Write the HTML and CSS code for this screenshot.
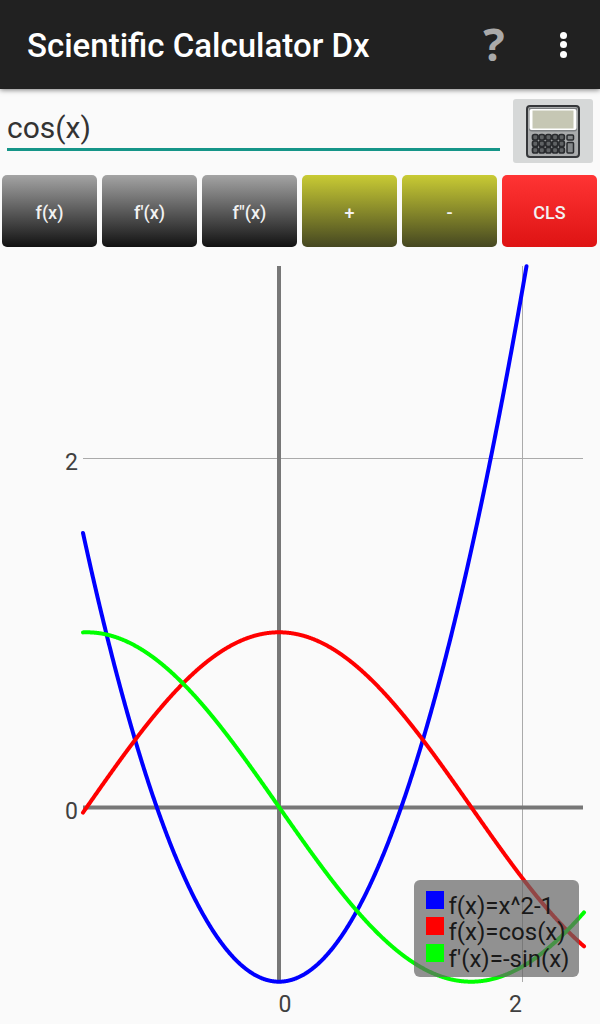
FILE: index.html
```html
<!DOCTYPE html>
<html lang="en">
<head>
	<meta charset="UTF-8">
	<meta name="viewport" content="width=device-width, initial-scale=1.0">
	<title>Scientific Calculator Dx</title>
	<link rel="stylesheet" href="styles.css">
</head>
<body>
<header class="app-bar">
	<h1>Scientific Calculator Dx</h1>
	<button type="button" class="help-button" aria-label="Help">?</button>
	<button type="button" class="menu-button" aria-label="Menu">
		<span class="dot"></span>
		<span class="dot"></span>
		<span class="dot"></span>
	</button>
</header>

<div class="input-row">
	<input type="text" class="formula" value="cos(x)" aria-label="Function">
	<button type="button" class="calc-button" aria-label="Calculator">
		<svg width="54" height="53" viewBox="0 0 54 53">
			<rect x="1" y="1" width="52" height="51" rx="3" fill="#a9abac" stroke="#35373a" stroke-width="2"/>
			<path d="M3 3H51V24Q51 26.500 48 26.500H6Q3 26.500 3 24Z" fill="#7b7e80"/>
			<rect x="3.500" y="4" width="47" height="21" rx="2" fill="#fff"/>
			<rect x="6.500" y="5.500" width="41" height="18" fill="#c6c7b4"/>
			<g id="keys" fill="#606365" stroke="#292b2e" stroke-width="1.700"></g>
			<rect x="41" y="30" width="6.500" height="5" rx="1" fill="#85888a" stroke="#292b2e" stroke-width="1.500"/>
			<rect x="41" y="37.500" width="6.500" height="10.500" rx="1" fill="#85888a" stroke="#292b2e" stroke-width="1.500"/>
		</svg>
	</button>
</div>

<div class="button-row">
	<button type="button" class="gray">f(x)</button>
	<button type="button" class="gray">f'(x)</button>
	<button type="button" class="gray">f"(x)</button>
	<button type="button" class="olive">+</button>
	<button type="button" class="olive">-</button>
	<button type="button" class="red">CLS</button>
</div>

<div class="graph">
	<svg id="plot" width="600" height="774" viewBox="0 250 600 774">
		<g class="grid">
			<line x1="83" y1="458.500" x2="583" y2="458.500"/>
			<line x1="522.500" y1="266" x2="522.500" y2="982"/>
		</g>
		<g class="axes">
			<line x1="83" y1="807.500" x2="583" y2="807.500"/>
			<line x1="279" y1="266" x2="279" y2="982"/>
		</g>
		<g class="labels">
			<text x="65" y="470">2</text>
			<text x="65" y="819">0</text>
			<text x="278.500" y="1012">0</text>
			<text x="509" y="1012">2</text>
		</g>
		<g id="curves"></g>
	</svg>
	<ul class="legend">
		<li><span class="swatch blue"></span>f(x)=x^2-1</li>
		<li><span class="swatch bright-red"></span>f(x)=cos(x)</li>
		<li><span class="swatch green"></span>f'(x)=-sin(x)</li>
	</ul>
</div>

<script src="graph.js"></script>
</body>
</html>
```
FILE: styles.css
```css
* {
	box-sizing: border-box;
}
body {
	margin: 0;
	height: 1024px;
	background-color: #fafafa;
	font-family: Roboto, sans-serif;
	overflow: hidden;
}
button {
	border: none;
	padding: 0;
	font-family: inherit;
}
.app-bar {
	position: relative; /* Keeps the shadow above the input row */
	display: flex;
	align-items: center;
	height: 89px;
	padding-left: 27px;
	background-color: #212121;
	color: #fff;
	box-shadow: 0 1px 5px rgba(0, 0, 0, 0.5);
}
.app-bar h1 {
	flex: 1;
	margin: 2px 0 0;
	font-size: 33px;
	font-weight: 500;
	white-space: nowrap;
}
.help-button {
	width: 60px;
	margin-top: -1px;
	background: none;
	color: #aaa;
	font-family: "Open Sans", sans-serif;
	font-size: 45px;
	font-weight: bold;
	line-height: 60px;
}
.menu-button {
	display: flex;
	flex-direction: column;
	align-items: center;
	gap: 2.5px;
	width: 76px;
	padding-left: 2px;
	background: none;
}
.dot {
	width: 7px;
	height: 7px;
	border-radius: 50%;
	background-color: #fff;
}
.input-row {
	display: flex;
	height: 86px;
	padding: 10px 7px 12px;
	gap: 13px;
}
.formula {
	width: 493px;
	height: 52px;
	padding: 7px 0 0;
	border: none;
	border-bottom: 3px solid #159588;
	background: none;
	color: #333;
	font-family: inherit;
	font-size: 30px;
	outline: none;
}
.calc-button {
	display: flex;
	justify-content: center;
	align-items: center;
	width: 80px;
	height: 64px;
	border-radius: 3px;
	background-color: #d6d8d8;
}
.button-row {
	display: grid;
	grid-template-columns: repeat(6, 1fr);
	gap: 5px;
	padding: 0 3px 0 2px;
}
.button-row button {
	height: 72px;
	border-radius: 5px;
	color: #f2f2f2;
	font-size: 18px;
	font-weight: 500;
	padding-top: 2px;
}
.button-row .gray {
	background: linear-gradient(#a4a4a4, #121212);
}
.button-row .olive {
	background: linear-gradient(#c9cb34, #454721);
}
.button-row .red {
	background: linear-gradient(#ff3434, #de1313);
}
.graph {
	position: relative;
	margin-top: 3px;
}
.graph svg {
	display: block;
}
.grid line {
	stroke: #aaa;
	stroke-width: 1;
}
.axes line {
	stroke: #777;
	stroke-width: 4;
}
.labels text {
	fill: #404040;
	font-size: 23px;
}
#curves path {
	fill: none;
	stroke-width: 4;
	stroke-linecap: round;
	stroke-linejoin: round;
}
/* Legend floats over the curves */
.legend {
	position: absolute;
	right: 21px;
	bottom: 47px;
	width: 165px;
	height: 97px;
	margin: 0;
	padding: 11px 12px;
	border-radius: 6px;
	background-color: rgba(100, 100, 100, 0.7);
	color: #191919;
	font-size: 24px;
	list-style: none;
}
.legend li {
	display: flex;
	gap: 4.5px;
	height: 26.3px;
	line-height: 30px;
	white-space: nowrap;
}
.swatch {
	flex-shrink: 0;
	width: 18px;
	height: 18px;
}
.blue {
	background-color: #00f;
}
.bright-red {
	background-color: #f00;
}
.green {
	background-color: #0f0;
}
```
FILE: graph.js
```js
const svgNS = 'http://www.w3.org/2000/svg';

// Screen position of the origin and pixels per unit
const origin = { x: 279, y: 807 };
const scale = { x: 122.3, y: 174.7 };
const left = 83;
const right = 584;
const topEdge = 266;

const functions = [
	{ color: '#0000ff', f: x => x * x - 1 },
	{ color: '#ff0000', f: x => Math.cos(x) },
	{ color: '#00ff00', f: x => -Math.sin(x) }
];

functions.forEach(({ color, f }) => {
	const points = [];
	for (let px = left; px <= right; px += 0.5) {
		const py = origin.y - f((px - origin.x) / scale.x) * scale.y;
		if (py >= topEdge) {
			points.push(`${px} ${py.toFixed(2)}`);
		}
	}
	const path = document.createElementNS(svgNS, 'path');
	path.setAttribute('d', 'M' + points.join('L'));
	path.setAttribute('stroke', color);
	document.getElementById('curves').appendChild(path);
});

// Small keys on the calculator icon
for (let row = 0; row < 3; row++) {
	for (let col = 0; col < 5; col++) {
		const key = document.createElementNS(svgNS, 'rect');
		key.setAttribute('x', 6.5 + col * 6.6);
		key.setAttribute('y', 29.5 + row * 6.5);
		key.setAttribute('width', 5.5);
		key.setAttribute('height', 5.5);
		key.setAttribute('rx', 2);
		document.getElementById('keys').appendChild(key);
	}
}
```
